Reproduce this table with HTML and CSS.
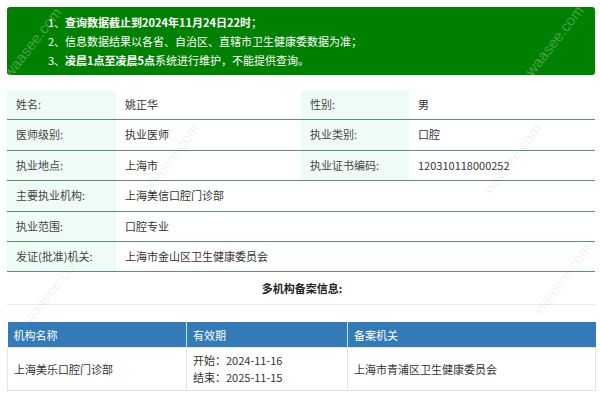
FILE: index.html
```html
<!DOCTYPE html>
<html lang="zh-CN">
<head>
<meta charset="utf-8">
<title>医师执业信息</title>
<link rel="stylesheet" href="styles.css">
</head>
<body>
<div class="page">
  <div class="notice">
    <p><span class="num">1、</span><b>查询数据截止到2024年11月24日22时</b>；</p>
    <p><span class="num">2、</span>信息数据结果以各省、自治区、直辖市卫生健康委数据为准；</p>
    <p><span class="num">3、</span><b>凌晨1点至凌晨5点</b>系统进行维护，不能提供查询。</p>
  </div>

  <div class="info">
    <div class="row">
      <div class="lab">姓名:</div><div class="val">姚正华</div>
      <div class="lab">性别:</div><div class="val">男</div>
    </div>
    <div class="row">
      <div class="lab">医师级别:</div><div class="val">执业医师</div>
      <div class="lab">执业类别:</div><div class="val">口腔</div>
    </div>
    <div class="row">
      <div class="lab">执业地点:</div><div class="val">上海市</div>
      <div class="lab">执业证书编码:</div><div class="val">120310118000252</div>
    </div>
    <div class="row">
      <div class="lab">主要执业机构:</div><div class="val wide">上海美信口腔门诊部</div>
    </div>
    <div class="row">
      <div class="lab">执业范围:</div><div class="val wide">口腔专业</div>
    </div>
    <div class="row">
      <div class="lab">发证(批准)机关:</div><div class="val wide">上海市金山区卫生健康委员会</div>
    </div>
  </div>

  <div class="multi-title">多机构备案信息:</div>

  <table class="reg">
    <thead>
      <tr><th class="c1">机构名称</th><th class="c2">有效期</th><th class="c3">备案机关</th></tr>
    </thead>
    <tbody>
      <tr>
        <td>上海美乐口腔门诊部</td>
        <td class="dates">开始：2024-11-16<br>结束：2025-11-15</td>
        <td>上海市青浦区卫生健康委员会</td>
      </tr>
    </tbody>
  </table>

  <span class="wm wm-light wm1">waasee.com</span>
  <span class="wm wm-light wm2">waasee.com</span>
  <span class="wm wm-dark wm3">waasee.com</span>
  <span class="wm wm-dark wm4">waasee.com</span>
  <span class="wm wm-dark wm5">waasee.com</span>
  <span class="wm wm-dark wm6">waasee.com</span>
</div>
</body>
</html>
```

FILE: styles.css
```css
* { box-sizing: border-box; }
html, body { margin: 0; padding: 0; background: #fff; }
body {
  font-family: "Noto Sans CJK SC", "Noto Sans", sans-serif;
  font-size: 11px;
  color: #333;
  width: 600px;
  height: 403px;
  overflow: hidden;
}
.page {
  position: relative;
  padding: 7px 5px 0 7px;
}
.notice {
  background: #008000;
  color: #fff;
  border-radius: 3px;
  padding: 6px 10px 5px 41px;
  height: 68px;
}
.notice p {
  margin: 0;
  line-height: 19px;
  white-space: nowrap;
}
.notice b { font-weight: 700; }
.info {
  margin-top: 15px;
}
.row {
  display: grid;
  grid-template-columns: 109px 185px 108px 186px;
  border-bottom: 1px solid #5e8f74;
}
.lab, .val {
  height: 29.4px;
  line-height: 29.4px;
  padding-left: 9px;
  white-space: nowrap;
}
.lab { background: #effcf5; color: #444; }
.val { background: #fff; color: #333; }
.val.wide { grid-column: 2 / 5; }
.multi-title {
  text-align: center;
  font-weight: 700;
  color: #222;
  height: 33px;
  line-height: 33px;
  border-bottom: 1px solid #eaeaea;
  padding-left: 2px;
}
.reg {
  margin-top: 17px;
  width: 588px;
  border-collapse: collapse;
  table-layout: fixed;
}
.reg th {
  background: #337ab7;
  color: #fff;
  font-weight: 400;
  text-align: left;
  height: 25px;
  padding: 0 6px;
  border-left: 1px solid #cfe0ee;
}
.reg th:first-child { border-left: 0; }
.c1 { width: 179px; }
.c2 { width: 161px; }
.c3 { width: 248px; }
.reg td {
  border: 1px solid #e4e4e4;
  height: 43px;
  padding: 0 6px;
  color: #333;
  vertical-align: middle;
}
.reg td.dates { line-height: 17px; }
.wm {
  position: absolute;
  font-family: "Liberation Sans", sans-serif;
  font-size: 15px;
  transform: rotate(-52deg);
  white-space: nowrap;
  pointer-events: none;
}
.wm-light { color: rgba(255,255,255,0.28); }
.wm-dark { color: rgba(0,0,0,0.07); }
.wm1 { left: -10px; top: 34px; }
.wm2 { left: 512px; top: 32px; }
.wm3 { left: 128px; top: 150px; }
.wm4 { left: 10px; top: 280px; }
.wm5 { left: 520px; top: 270px; }
.wm6 { left: 470px; top: 150px; }
```
